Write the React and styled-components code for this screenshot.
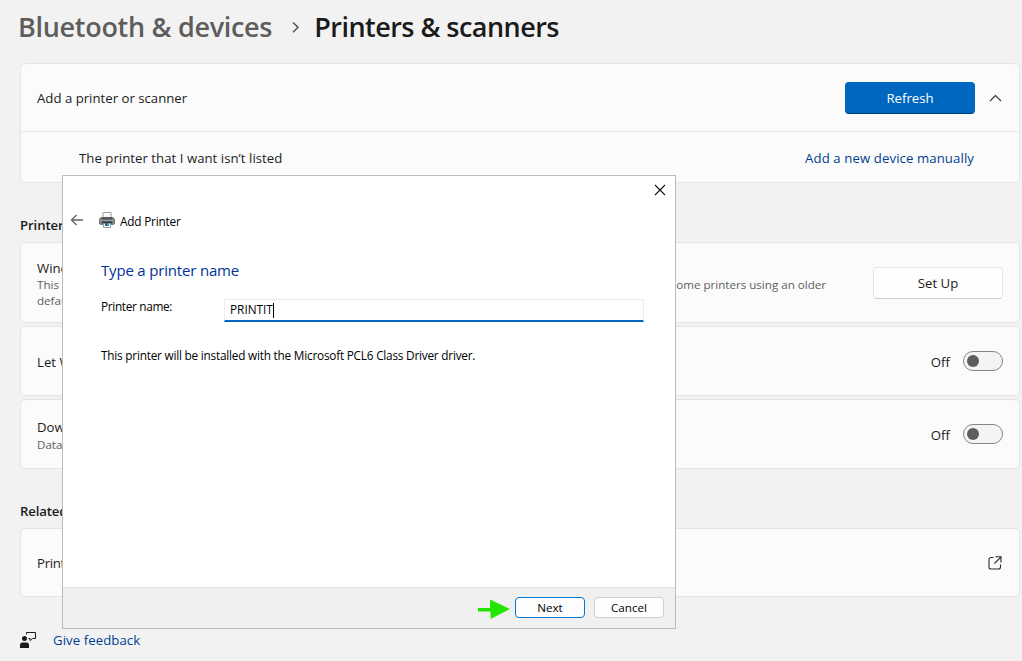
import React from "react";
import styled, { createGlobalStyle } from "styled-components";

const Global = createGlobalStyle`
  * { box-sizing: border-box; }
  html, body { margin: 0; padding: 0; background: #f2f2f2; overflow: hidden; }
  body { font-family: "Open Sans", "Noto Sans", sans-serif; color: #1b1b1b; }
`;

const Page = styled.main`
  position: relative;
  width: 1022px;
  height: 661px;
  padding: 9px 2px 0 20px;
  background: #f2f2f2;
  overflow: hidden;
`;

const Text = styled.span`
  display: block;
  white-space: nowrap;
  font-size: ${(p) => p.$size || 13.2}px;
  line-height: ${(p) => p.$line || 20}px;
  font-weight: ${(p) => p.$weight || 400};
  letter-spacing: ${(p) => p.$track || 0}px;
  color: ${(p) => p.$color || "inherit"};
  padding-top: ${(p) => p.$drop || 0}px;
`;

const Breadcrumb = styled.header`
  display: flex;
  height: 54px;
  margin-left: -2px;
`;

const CrumbArrow = styled.svg`
  width: 9px;
  height: 13px;
  margin: 12px 14px 0 19px;
`;

const Card = styled.section`
  height: ${(p) => p.$height}px;
  margin-bottom: ${(p) => p.$gap || 0}px;
  background: #fbfbfb;
  border: 1px solid #e5e5e5;
  border-radius: 5px;
`;

const Row = styled.div`
  display: flex;
  align-items: center;
  justify-content: space-between;
  height: ${(p) => p.$height || "100%"};
  padding: 0 ${(p) => p.$end || 16}px 0 16px;
  & + & { border-top: 1px solid #e5e5e5; padding: 0 45px 0 58px; }
`;

const Cluster = styled.div`
  display: flex;
  align-items: center;
  gap: ${(p) => p.$gap || 13}px;
`;

const SettingsButton = styled.button`
  width: 130px;
  height: 32px;
  padding: 0;
  font-family: inherit;
  color: ${(p) => (p.$accent ? "#fff" : "#1b1b1b")};
  background: ${(p) => (p.$accent ? "#0067c0" : "#fefefe")};
  border: 1px solid ${(p) => (p.$accent ? "#0067c0" : "#e6e6e6")};
  border-bottom-color: ${(p) => (p.$accent ? "#003e73" : "#cfcfcf")};
  border-radius: 4px;
`;

const SectionTitle = styled.h2`
  height: ${(p) => p.$height}px;
  margin: 0;
  padding-top: ${(p) => p.$top}px;
`;

const Description = styled.div`
  display: flex;
  justify-content: space-between;
  width: 789px;
`;

const Toggle = styled.span`
  display: flex;
  align-items: center;
  width: 40px;
  height: 20px;
  padding-left: 3px;
  background: #f4f4f4;
  border: 1px solid #868686;
  border-radius: 10px;
  &::before {
    content: "";
    width: 12px;
    height: 12px;
    border-radius: 50%;
    background: #5d5d5d;
  }
`;

const Feedback = styled.footer`
  display: flex;
  gap: 16px;
  padding-top: 33px;
`;

const Dialog = styled.div`
  position: absolute;
  left: 62px;
  top: 175px;
  display: flex;
  flex-direction: column;
  width: 614px;
  height: 454px;
  background: #fff;
  border: 1px solid #bcbcbc;
  color: #000;
`;

const TitleStrip = styled.div`
  display: flex;
  justify-content: flex-end;
  height: 35px;
  padding: 8px 9px 0 0;
`;

const DialogHeader = styled.div`
  display: flex;
  height: 47px;
  padding-left: 7px;
`;

const BackArrow = styled.svg`
  flex: none;
  width: 29px;
  height: 18px;
`;

const DialogIcon = styled.svg`
  flex: none;
  width: 16px;
  height: 17px;
  margin: 1px 5px 0 0;
`;

const DialogBody = styled.div`
  flex: 1;
  padding: 0 31px 0 38px;
`;

const Field = styled.label`
  display: flex;
  justify-content: space-between;
  height: 63px;
  padding-top: 15px;
`;

const Input = styled.span`
  display: flex;
  width: 420px;
  height: 23px;
  margin-top: 2px;
  padding-left: 5px;
  border: 1px solid #ececec;
  border-bottom: 2px solid #0067c0;
`;

const Caret = styled.i`
  width: 1px;
  height: 15px;
  margin-top: 3px;
  background: #000;
`;

const DialogFooter = styled.div`
  display: flex;
  justify-content: flex-end;
  height: 41px;
  padding: 9px 11px 0 0;
  background: #f0f0f0;
  border-top: 1px solid #dfdfdf;
`;

const Pointer = styled.svg`
  width: 33px;
  height: 22px;
  margin-top: 1px;
`;

const DialogButton = styled.button`
  width: 70px;
  height: 21px;
  margin-left: ${(p) => p.$left}px;
  padding: 0;
  font-family: inherit;
  color: #000;
  background: #fdfdfd;
  border: 1px solid ${(p) => (p.$primary ? "#0078d4" : "#d0d0d0")};
  border-radius: 4px;
`;

const PrinterIcon = () => (
  <DialogIcon viewBox="0 0 16 17">
    <path d="M4 6V.5h8V6" fill="#fafafa" stroke="#9ba0a2" />
    <path d="M0 7 2 5h12l2 2v4.500l-1.500 1.500h-13L0 11.500z" fill="#7b7f80" />
    <path d="M3 5h10v2.500H3z" fill="#53585a" />
    <path d="M1 8h14v1H1z" fill="#9a9e9f" />
    <path d="M3 9.500h10v2H3z" fill="#34383a" />
    <path d="M13.500 8h1.500v1h-1.500z" fill="#5cc83c" />
    <path d="M4.500 11.500h7v4h-7z" fill="#f4f8fa" stroke="#9ba0a2" />
    <path d="M6 11h2v3H6z" fill="#2b5f9e" />
    <path d="M8 11h2v3H8z" fill="#2fa7b4" />
  </DialogIcon>
);

export default function App() {
  return (
    <>
      <Global />
      <Page>
        <Breadcrumb>
          <Text $size={27} $line={36} $weight={600} $track={-0.3} $color="#5d5d5d">Bluetooth &amp; devices</Text>
          <CrumbArrow viewBox="0 0 9 13" fill="none" stroke="#5a5a5a" strokeWidth="1.6">
            <path d="M2 1.5 7 6.3 2 11.2" />
          </CrumbArrow>
          <Text $size={27} $line={36} $weight={600} $track={-0.53}>Printers &amp; scanners</Text>
        </Breadcrumb>

        <Card $height={120}>
          <Row $height="67px" $end={17}>
            <Text>Add a printer or scanner</Text>
            <Cluster $gap={14}>
              <SettingsButton $accent><Text>Refresh</Text></SettingsButton>
              <svg width="13" height="8" viewBox="0 0 13 8" fill="none" stroke="#3a3a3a" strokeWidth="1.2">
                <path d="M1 7 6.5 1.5 12 7" />
              </svg>
            </Cluster>
          </Row>
          <Row $height="51px">
            <Text $drop={2} $track={0.03}>The printer that I want isn’t listed</Text>
            <Text $drop={2} $track={0.09} $color="#003e92">Add a new device manually</Text>
          </Row>
        </Card>

        <SectionTitle $height={59} $top={32}><Text $weight={600} $track={-0.1}>Printers</Text></SectionTitle>

        <Card $height={81} $gap={3}>
          <Row>
            <div>
              <Text $line={18} $drop={2}>Windows</Text>
              <Description>
                <Text $size={11.6} $line={16} $color="#606060">This feature</Text>
                <Text $size={11.6} $line={16} $color="#606060">some printers using an older</Text>
              </Description>
              <Text $size={11.6} $line={16} $color="#606060">default</Text>
            </div>
            <SettingsButton><Text>Set Up</Text></SettingsButton>
          </Row>
        </Card>
        <Card $height={70} $gap={3}>
          <Row>
            <Text $drop={2}>Let Win</Text>
            <Cluster><Text $drop={2}>Off</Text><Toggle /></Cluster>
          </Row>
        </Card>
        <Card $height={70}>
          <Row>
            <div>
              <Text $line={18} $drop={2}>Download</Text>
              <Text $size={11.6} $line={16} $drop={1} $color="#606060">Data charges</Text>
            </div>
            <Cluster><Text $drop={2}>Off</Text><Toggle /></Cluster>
          </Row>
        </Card>

        <SectionTitle $height={59} $top={32}><Text $weight={600} $track={-0.15}>Related</Text></SectionTitle>

        <Card $height={69}>
          <Row>
            <Text $track={-0.3}>Print server</Text>
            <svg width="16" height="16" viewBox="0 0 16 16" fill="none" stroke="#2b2b2b" strokeWidth="1.1">
              <path d="M6.500 2.500H4a2 2 0 0 0-2 2V12a2 2 0 0 0 2 2h7.500a2 2 0 0 0 2-2V9.500M8.500 1.800h5.500v5.700M14 1.800 7.500 8.500" />
            </svg>
          </Row>
        </Card>

        <Feedback>
          <svg width="17" height="18" viewBox="0 0 17 18">
            <circle cx="4.500" cy="8.500" r="2.500" fill="#1b1b1b" />
            <path d="M0 18v-3Q0 12.500 2.500 12.500h4Q9 12.500 9 15V18z" fill="#1b1b1b" />
            <path d="M6.500 4.500V2.500h9V8.500H12.500L10 10.500V8.500H8.500" fill="none" stroke="#1b1b1b" />
          </svg>
          <Text $color="#003e92" $track={0.07}>Give feedback</Text>
        </Feedback>

        <Dialog>
          <TitleStrip>
            <svg width="12" height="12" viewBox="0 0 12 12" stroke="#111" strokeWidth="1.1">
              <path d="M1 1 11 11M11 1 1 11" />
            </svg>
          </TitleStrip>
          <DialogHeader>
            <BackArrow viewBox="0 0 29 18" fill="none" stroke="#666" strokeWidth="1.4">
              <path d="M13 9H1.500M6.500 4 1.500 9 6.500 14" />
            </BackArrow>
            <PrinterIcon />
            <Text $size={11.8} $track={-0.2}>Add Printer</Text>
          </DialogHeader>
          <DialogBody>
            <Text $size={15} $line={24} $track={-0.18} $color="#003399">Type a printer name</Text>
            <Field>
              <Text $size={11.8} $line={18} $track={-0.32}>Printer name:</Text>
              <Input><Text $size={11.8} $line={19}>PRINTIT</Text><Caret /></Input>
            </Field>
            <Text $size={11.8} $line={20} $track={-0.22}>This printer will be installed with the Microsoft PCL6 Class Driver driver.</Text>
          </DialogBody>
          <DialogFooter>
            <Pointer viewBox="0 0 33 22" fill="#22e600">
              <path d="M0 10h12V1.500l20 9.500L12.500 21V13.500H0z" />
            </Pointer>
            <DialogButton $primary $left={4}><Text $size={11.6} $line={18}>Next</Text></DialogButton>
            <DialogButton $left={9}><Text $size={11.6} $line={18}>Cancel</Text></DialogButton>
          </DialogFooter>
        </Dialog>
      </Page>
    </>
  );
}
